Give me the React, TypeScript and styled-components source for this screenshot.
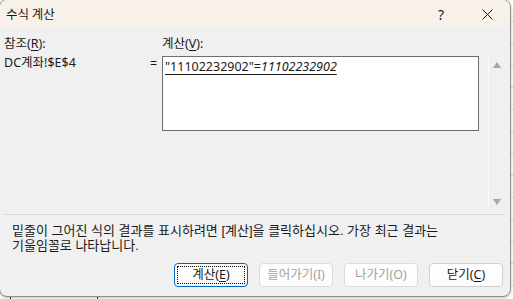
import React from "react";
import styled, { createGlobalStyle } from "styled-components";

const GlobalStyle = createGlobalStyle`
  html, body {
    margin: 0;
    padding: 0;
    width: 513px;
    height: 299px;
    overflow: hidden;
    background-color: #ffffff;
    background-image:
      linear-gradient(to right, transparent 10px, #3a3a3a 10px, #3a3a3a 11px, transparent 11px),
      linear-gradient(to right, transparent 97px, #3a3a3a 97px, #3a3a3a 98px, transparent 98px),
      repeating-linear-gradient(to bottom, transparent 0, transparent 21px, #d6d6d6 21px, #d6d6d6 22px);
    font-family: "Noto Sans", "Noto Sans CJK KR", sans-serif;
    font-size: 12.5px;
    color: #1a1a1a;
  }
`;

const Dialog = styled.div`
  box-sizing: border-box;
  width: 512px;
  height: 298px;
  margin: -1px 0 0 -1px;
  border: 1px solid #8e8e8e;
  border-radius: 8px;
  background: #f0f0f0;
  overflow: hidden;
  display: flex;
  flex-direction: column;
  box-shadow: 0 1px 3px rgba(0, 0, 0, 0.25);
`;

const TitleBar = styled.div`
  height: 28px;
  flex: none;
  background: #f8f1e9;
  display: flex;
  align-items: center;
  padding-left: 6px;
`;

const Title = styled.span`
  flex: 1;
  font-size: 12.5px;
  line-height: 14px;
  margin-top: -1px;
  font-family: "Noto Sans CJK KR", sans-serif;
`;

const TitleButton = styled.div<{ $w: number }>`
  width: ${(p) => p.$w}px;
  height: 28px;
  display: flex;
  align-items: center;
  justify-content: center;
  font-size: 14px;
`;

const Main = styled.div`
  display: flex;
  padding: 9px 0 0 4px;
`;

const RefCol = styled.div`
  width: 146px;
  display: flex;
  flex-direction: column;
  gap: 5px;
`;

const Label = styled.div`
  line-height: 14px;
  height: 14px;
  white-space: nowrap;
`;

const Key = styled.span`
  text-decoration: underline;
  text-underline-offset: 2px;
`;

const EqCol = styled.div`
  width: 12px;
  padding-top: 20px;
  line-height: 14px;
`;

const EvalCol = styled.div`
  width: 317px;
  display: flex;
  flex-direction: column;
  gap: 5px;
`;

const EvalBox = styled.div`
  box-sizing: border-box;
  height: 75px;
  background: #ffffff;
  border: 1px solid #6d6d6d;
  padding: 2px 0 0 2px;
  line-height: 16px;
`;

const Expr = styled.span`
  text-decoration: underline;
  text-underline-offset: 3px;
  white-space: nowrap;
`;

const Result = styled.i`
  font-style: italic;
`;

const ScrollBar = styled.div`
  margin: 19px 0 0 9px;
  width: 17px;
  height: 154px;
  border-left: 1px solid #fbfbfb;
  display: flex;
  flex-direction: column;
  justify-content: space-between;
  align-items: center;
  padding: 6px 0 5px;
  box-sizing: border-box;
`;

const Arrow = styled.div<{ $down?: boolean }>`
  width: 0;
  height: 0;
  border-left: 4.5px solid transparent;
  border-right: 4.5px solid transparent;
  ${(p) =>
    p.$down
      ? "border-top: 6px solid #a6a6a6;"
      : "border-bottom: 6px solid #a6a6a6;"}
`;

const Separator = styled.div`
  height: 1px;
  background: #dadada;
  margin: 4px 6px 0 3px;
`;

const Message = styled.div`
  padding: 8px 0 0 12px;
  font-family: "Liberation Sans", "Noto Sans CJK KR", sans-serif;
  font-size: 13px;
  line-height: 15px;
  white-space: nowrap;
`;

const ButtonRow = styled.div`
  display: flex;
  justify-content: flex-end;
  gap: 11px;
  padding: 10px 7px 0 0;
`;

const Button = styled.div<{ $primary?: boolean; $disabled?: boolean }>`
  box-sizing: border-box;
  width: 74px;
  height: 24px;
  border-radius: 4px;
  background: #fdfdfd;
  border: 1px solid ${(p) => (p.$primary ? "#0067c0" : p.$disabled ? "#dcdcdc" : "#d0d0d0")};
  color: ${(p) => (p.$disabled ? "#a2a2a2" : "#1a1a1a")};
  display: flex;
  align-items: center;
  justify-content: center;
  padding: 2px;
  line-height: 14px;
`;

const Focus = styled.div`
  flex: 1;
  align-self: stretch;
  border: 1px dotted #000;
  display: flex;
  align-items: center;
  justify-content: center;
`;

const CloseIcon = () => (
  <svg width="11" height="11" viewBox="0 0 11 11">
    <path d="M0.5 0.5 L10.5 10.5 M10.5 0.5 L0.5 10.5" stroke="#1a1a1a" strokeWidth="1" fill="none" />
  </svg>
);

export default function App() {
  return (
    <>
      <GlobalStyle />
      <Dialog>
        <TitleBar>
          <Title>수식 계산</Title>
          <TitleButton $w={46}>?</TitleButton>
          <TitleButton $w={46}>
            <CloseIcon />
          </TitleButton>
        </TitleBar>
        <Main>
          <RefCol>
            <Label>
              참조(<Key>R</Key>):
            </Label>
            <Label>DC계좌!$E$4</Label>
          </RefCol>
          <EqCol>=</EqCol>
          <EvalCol>
            <Label>
              계산(<Key>V</Key>):
            </Label>
            <EvalBox>
              <Expr>
                "11102232902"=<Result>11102232902</Result>
              </Expr>
            </EvalBox>
          </EvalCol>
          <ScrollBar>
            <Arrow />
            <Arrow $down />
          </ScrollBar>
        </Main>
        <Separator />
        <Message>
          밑줄이 그어진 식의 결과를 표시하려면 [계산]을 클릭하십시오. 가장 최근 결과는
          <br />
          기울임꼴로 나타납니다.
        </Message>
        <ButtonRow>
          <Button $primary>
            <Focus>
              계산(<Key>E</Key>)
            </Focus>
          </Button>
          <Button $disabled>들어가기(I)</Button>
          <Button $disabled>나가기(O)</Button>
          <Button>
            닫기(<Key>C</Key>)
          </Button>
        </ButtonRow>
      </Dialog>
    </>
  );
}
